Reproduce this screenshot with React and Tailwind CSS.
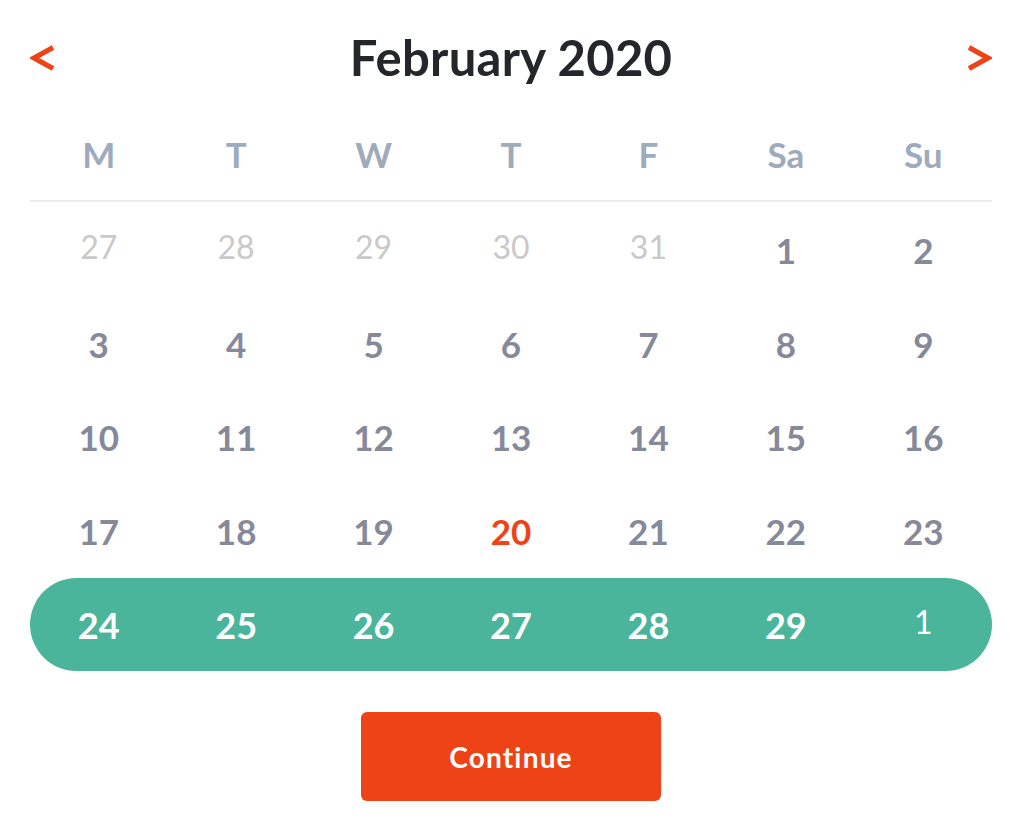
const weekdays = ['M', 'T', 'W', 'T', 'F', 'Sa', 'Su'];

const rows = [
  [
    { d: 27, muted: true },
    { d: 28, muted: true },
    { d: 29, muted: true },
    { d: 30, muted: true },
    { d: 31, muted: true },
    { d: 1 },
    { d: 2 },
  ],
  [3, 4, 5, 6, 7, 8, 9].map(d => ({ d })),
  [10, 11, 12, 13, 14, 15, 16].map(d => ({ d })),
  [17, 18, 19, 20, 21, 22, 23].map(d => ({ d, today: d === 20 })),
];

const selected = [24, 25, 26, 27, 28, 29, 1];

function Chevron({ dir }) {
  return (
    <svg width="26" height="26" viewBox="0 0 26 26" className="block">
      {dir === 'left' ? (
        <polyline points="23,2.5 4,13 23,23.5" fill="none" stroke="#ee4316" strokeWidth="5" strokeLinejoin="miter" />
      ) : (
        <polyline points="3,2.5 22,13 3,23.5" fill="none" stroke="#ee4316" strokeWidth="5" strokeLinejoin="miter" />
      )}
    </svg>
  );
}

export default function App() {
  return (
    <div className="w-[1036px] h-[831px] bg-white font-['Lato',sans-serif]">
      <div className="ml-[30px] w-[962px]">
        {/* month header */}
        <div className="h-[115px] flex items-center justify-between">
          <button className="w-[30px] h-[30px] flex items-center justify-start">
            <Chevron dir="left" />
          </button>
          <h1 className="text-[49px] leading-none font-bold text-[#23262b] tracking-[0.3px]">February 2020</h1>
          <button className="w-[30px] h-[30px] flex items-center justify-end">
            <Chevron dir="right" />
          </button>
        </div>

        {/* weekday labels */}
        <div className="grid grid-cols-7 h-[85px] pb-[7px] items-center">
          {weekdays.map((w, i) => (
            <div key={i} className="text-center text-[35px] leading-none font-bold text-[#9eabbd]">
              {w}
            </div>
          ))}
        </div>
        <div className="h-[2px] bg-[#ececec]" />

        {/* days */}
        <div className="mt-[2px]">
          {rows.map((row, r) => (
            <div key={r} className="grid grid-cols-7 h-[93.5px] items-center">
              {row.map((c, i) => (
                <div
                  key={i}
                  className={
                    c.muted
                      ? 'text-center text-[32px] leading-none font-normal text-[#c9c9c9] -translate-y-[4px]'
                      : c.today
                      ? 'text-center text-[35px] leading-none font-bold text-[#ee4316]'
                      : 'text-center text-[35px] leading-none font-bold text-[#868999]'
                  }
                >
                  {c.d}
                </div>
              ))}
            </div>
          ))}
          <div className="grid grid-cols-7 h-[93px] items-center rounded-full bg-[#4bb59b]">
            {selected.map((d, i) => (
              <div
                key={i}
                className={
                  i === 6
                    ? 'text-center text-[32px] leading-none font-normal text-white -translate-y-[3px]'
                    : 'text-center text-[36px] leading-none font-bold text-white'
                }
              >
                {d}
              </div>
            ))}
          </div>
        </div>

        <div className="flex justify-center mt-[41px]">
          <button className="w-[300px] h-[89px] rounded-[6px] bg-[#ee4316] text-white text-[28px] font-bold tracking-[1.2px]">
            Continue
          </button>
        </div>
      </div>
    </div>
  );
}
